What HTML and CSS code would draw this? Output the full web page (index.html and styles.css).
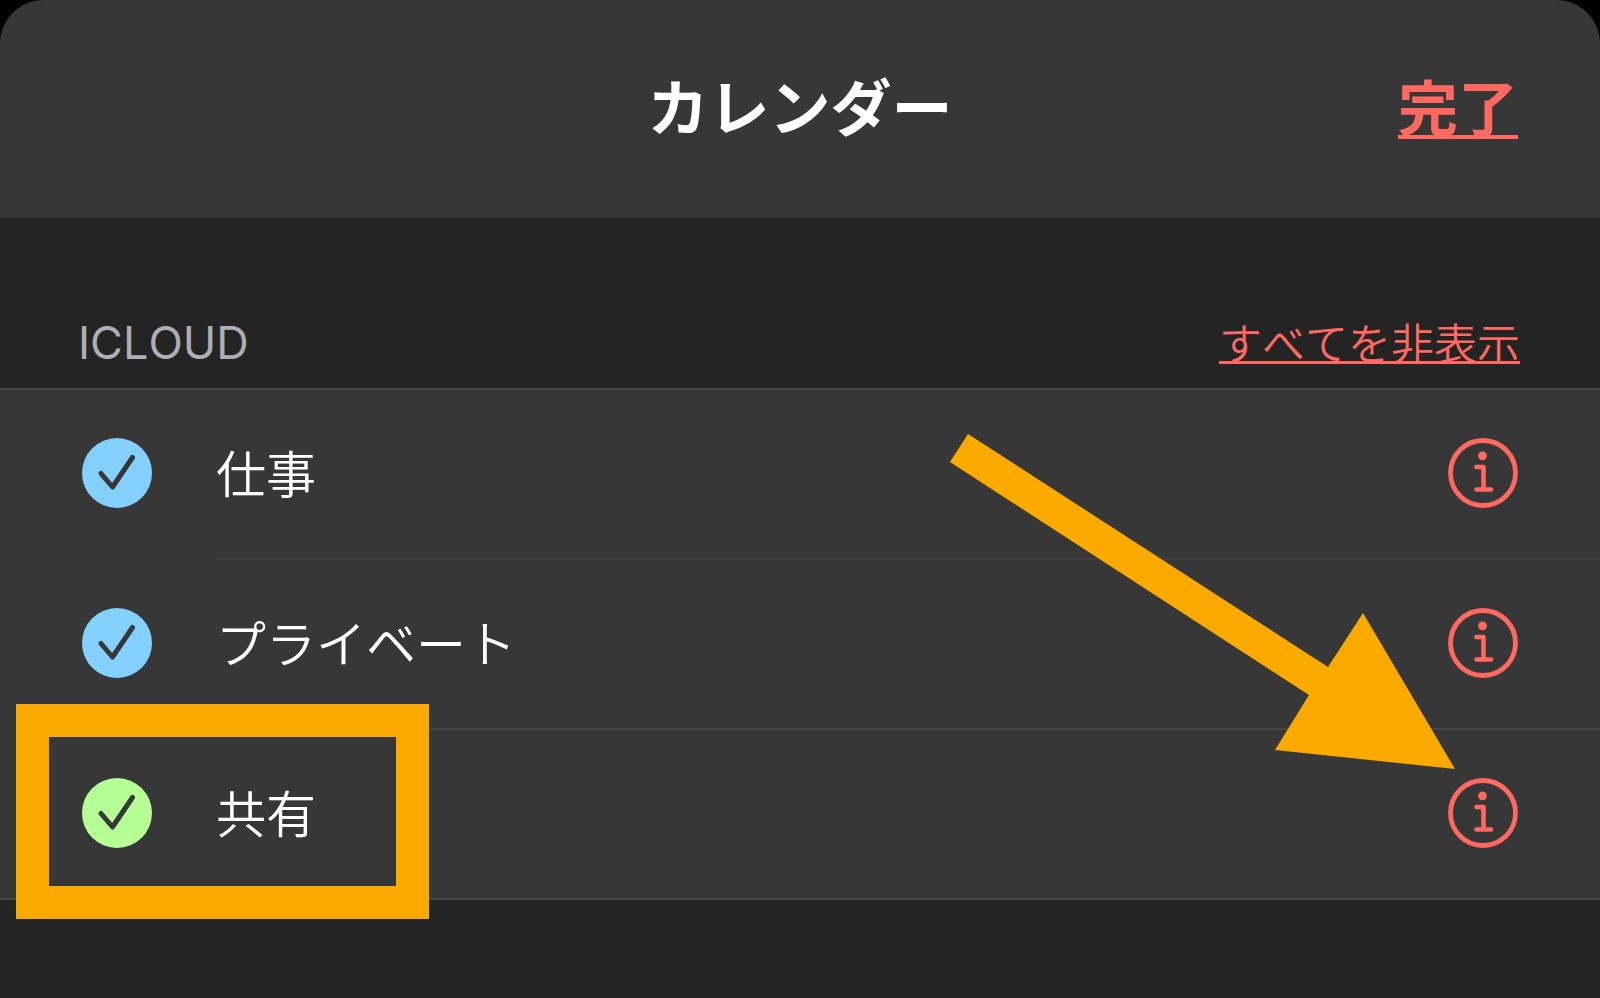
FILE: index.html
```html
<!DOCTYPE html>
<html lang="ja">
<head>
<meta charset="utf-8">
<meta name="viewport" content="width=device-width, initial-scale=1">
<title>カレンダー</title>
<link rel="stylesheet" href="styles.css">
</head>
<body>
<svg class="symbols" aria-hidden="true">
  <symbol id="check" viewBox="0 0 70 70"><path d="M19 35.500 30.500 49 50.500 19.500" fill="none" stroke="currentColor" stroke-width="5" stroke-linecap="round" stroke-linejoin="round"/></symbol>
  <symbol id="info" viewBox="0 0 70 70">
    <circle cx="35" cy="35" r="32.500" fill="none" stroke="currentColor" stroke-width="4.800"/>
    <circle cx="34.500" cy="17.800" r="4.400" fill="currentColor"/>
    <path d="M28.500 29H35.500V51.500M28.500 51.500H43" fill="none" stroke="currentColor" stroke-width="4.600" stroke-linecap="round" stroke-linejoin="round"/>
  </symbol>
</svg>
<div class="sheet">
  <header class="header">
    <h1 class="title">カレンダー</h1>
    <button type="button" class="link done">完了</button>
  </header>
  <main>
    <div class="section-head">
      <h2 class="section-title">ICLOUD</h2>
      <button type="button" class="link hide-all">すべてを非表示</button>
    </div>
    <ul class="list">
      <li class="row">
        <span class="tick"><input id="work" type="checkbox" checked><svg aria-hidden="true"><use href="#check"/></svg></span>
        <div class="cell"><label for="work">仕事</label><button type="button" class="info" aria-label="仕事の詳細"><svg aria-hidden="true"><use href="#info"/></svg></button></div>
      </li>
      <li class="row">
        <span class="tick"><input id="private" type="checkbox" checked><svg aria-hidden="true"><use href="#check"/></svg></span>
        <div class="cell strong"><label for="private">プライベート</label><button type="button" class="info" aria-label="プライベートの詳細"><svg aria-hidden="true"><use href="#info"/></svg></button></div>
      </li>
      <li class="row">
        <span class="tick green"><input id="shared" type="checkbox" checked><svg aria-hidden="true"><use href="#check"/></svg></span>
        <div class="cell"><label for="shared">共有</label><button type="button" class="info" aria-label="共有の詳細"><svg aria-hidden="true"><use href="#info"/></svg></button></div>
        <span class="highlight"></span>
      </li>
      <li class="pointer" aria-hidden="true"><svg viewBox="0 0 505 335"><path d="M18 0 378 233 413 179 505 335 325 316 359 261 0 28Z" fill="#fbab00"/></svg></li>
    </ul>
  </main>
</div>
</body>
</html>
```
FILE: styles.css
```css
* { box-sizing: border-box; }

body {
  margin: 0;
  background: #000;
  color: #fff;
  font-family: "Noto Sans CJK JP", sans-serif;
  font-kerning: none;
}

button {
  padding: 0;
  border: 0;
  background: none;
  font-family: inherit;
  font-kerning: inherit;
  cursor: pointer;
}

.symbols { position: absolute; width: 0; height: 0; }

.sheet {
  min-height: 100vh;
  overflow: hidden;
  border-radius: 44px 44px 0 0;
  background: #242424;
}

.header {
  display: grid;
  grid-template-columns: 1fr auto 1fr;
  align-items: center;
  height: 218px;
  padding: 0 82px 8px;
  background: #373737;
}

.title {
  grid-column: 2;
  margin: 0;
  font-size: 61px;
  line-height: 80px;
  font-weight: 700;
}

.link {
  color: #ff6961;
  text-decoration: underline;
  text-decoration-skip-ink: none;
}

.done {
  justify-self: end;
  font-size: 60px;
  line-height: 80px;
  font-weight: 700;
  text-decoration-thickness: 4px;
  text-underline-offset: 4px;
}

.section-head {
  display: flex;
  justify-content: space-between;
  align-items: flex-start;
  height: 170px;
  padding: 93px 80px 0 78px;
}

.section-title {
  margin: 0;
  color: #aeaeb4;
  font-family: Inter, sans-serif;
  font-size: 45px;
  line-height: 64px;
  font-weight: 400;
}

.hide-all {
  font-size: 43px;
  line-height: 60px;
  font-weight: 350;
  text-decoration-thickness: 3px;
  text-underline-offset: 1px;
}

.list {
  position: relative;
  margin: 0;
  padding: 0;
  list-style: none;
  border-top: 2px solid #464646;
  border-bottom: 2px solid #464646;
  background: #373737;
}

.row {
  position: relative;
  display: flex;
  gap: 64px;
  height: 170px;
  padding-left: 82px;
}

.row:nth-child(3) { height: 168px; }

.tick {
  display: grid;
  flex: none;
  width: 70px;
  height: 70px;
  margin-top: 48px;
  color: #373737;
}

.tick input {
  grid-area: 1 / 1;
  appearance: none;
  width: 70px;
  height: 70px;
  margin: 0;
  border-radius: 50%;
  background: #84d1ff;
}

.tick.green input { background: #b5ff96; }

.tick svg {
  grid-area: 1 / 1;
  width: 70px;
  height: 70px;
  pointer-events: none;
}

.tick input:not(:checked) + svg { display: none; }

.cell {
  display: flex;
  flex: 1;
  justify-content: space-between;
  align-items: flex-start;
  padding: 48px 82px 0 0;
  border-bottom: 2px solid #3f3f3f;
}

.cell.strong { border-color: #464646; }
.row:nth-child(3) .cell { border-bottom: 0; }

.cell label {
  font-size: 50px;
  line-height: 66px;
  font-weight: 350;
}

.info {
  width: 70px;
  height: 70px;
  color: #ff6961;
}

.info svg { display: block; width: 70px; height: 70px; }

.highlight {
  position: absolute;
  top: -26px;
  left: 16px;
  width: 413px;
  height: 215px;
  border: 33px solid #fbab00;
  pointer-events: none;
}

.pointer {
  position: absolute;
  top: 44px;
  right: 145px;
  width: 505px;
  height: 335px;
  pointer-events: none;
}

.pointer svg { display: block; width: 100%; height: 100%; }
```
